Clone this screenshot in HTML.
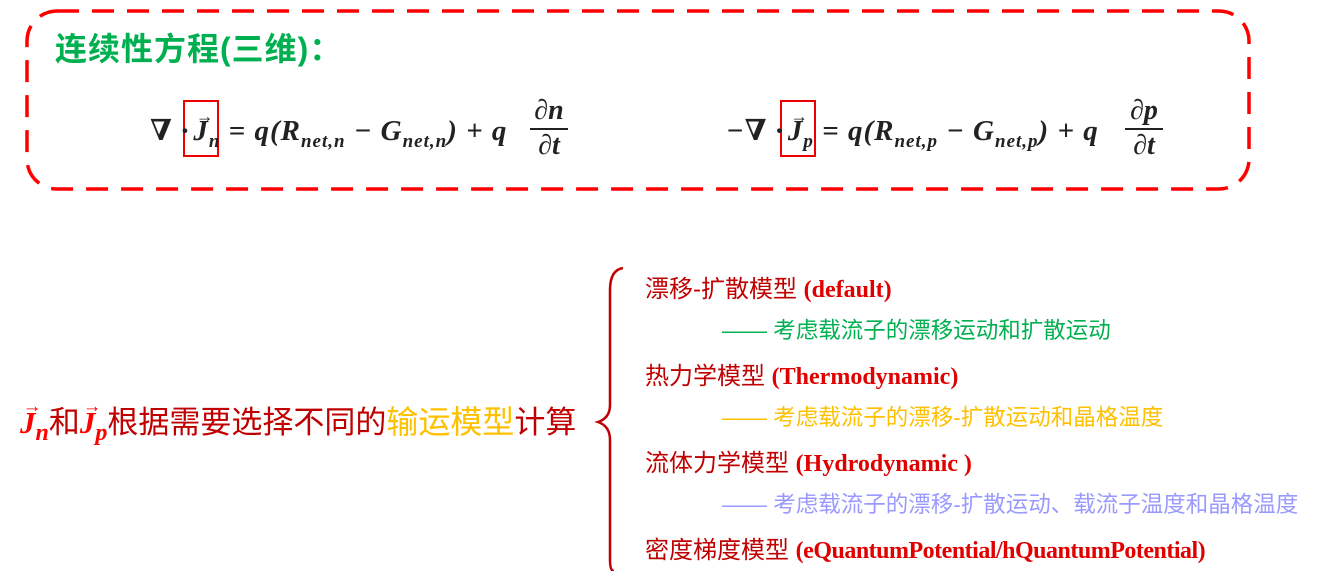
<!DOCTYPE html>
<html><head><meta charset="utf-8"><style>
body{margin:0;width:1340px;height:571px;background:#fff;position:relative;overflow:hidden;font-family:"Liberation Sans","Noto Sans CJK SC",sans-serif}
.a{position:absolute;white-space:nowrap;line-height:1}
.m{font-family:"Liberation Serif","DejaVu Serif",serif;font-weight:bold;font-style:italic;color:#222}
.r{color:#c00000;font-size:24px}
.r b{font-family:"Liberation Serif",serif;color:#e00000}
.s{font-size:22.5px}
.sub{font-size:19px;position:relative;top:7px}
.v{position:relative;display:inline-block}
.v::before{content:"→";position:absolute;top:-0.5em;left:0.15em;font-size:0.6em;font-style:normal;font-weight:normal}
</style></head><body>
<svg class="a" style="left:0;top:0" width="1340" height="571">
<rect x="27" y="11" width="1222" height="178" rx="30" fill="none" stroke="#f00" stroke-width="3.5" stroke-dasharray="22 13"/>
<rect x="184" y="101" width="34" height="55" fill="none" stroke="#e00" stroke-width="2"/>
<rect x="781" y="101" width="34" height="55" fill="none" stroke="#e00" stroke-width="2"/>
<path d="M623 268 Q610 270 610 290 L610 405 Q610 418 598 422 Q610 426 610 440 L610 560 Q610 571 614 571" fill="none" stroke="#c00000" stroke-width="2.5"/>
</svg>
<div class="a" style="left:55px;top:33px;font-size:32px;color:#00b050;font-weight:bold;letter-spacing:1px">连续性方程(三维)：</div>
<div class="a m" style="left:150px;top:117px;font-size:29px;letter-spacing:1px">∇ ·<span class="v" style="margin-left:4px">J</span><span class="sub">n</span> = q(R<span class="sub">net,n</span> − G<span class="sub">net,n</span>) + q</div>
<div class="a m" style="left:530px;top:97px;font-size:28px;text-align:center;width:38px">∂n<div style="border-top:2px solid #222;margin:3px 0 2px"></div>∂t</div>
<div class="a m" style="left:726px;top:117px;font-size:29px;letter-spacing:1px">−∇ ·<span class="v" style="margin-left:4px">J</span><span class="sub">p</span> = q(R<span class="sub">net,p</span> − G<span class="sub">net,p</span>) + q</div>
<div class="a m" style="left:1125px;top:97px;font-size:28px;text-align:center;width:38px">∂p<div style="border-top:2px solid #222;margin:3px 0 2px"></div>∂t</div>
<div class="a" style="left:20px;top:406px;font-size:31px;color:#c00000"><span class="m" style="color:#f00"><span class="v">J</span><span class="sub" style="font-size:24px">n</span></span>和<span class="m" style="color:#f00"><span class="v">J</span><span class="sub" style="font-size:24px">p</span></span>根据需要选择不同的<span style="color:#ffc000;font-size:32px">输运模型</span>计算</div>
<div class="a r" style="left:645px;top:278px">漂移-扩散模型 <b>(default)</b></div>
<div class="a s" style="left:722px;top:320px;color:#00b050">—— 考虑载流子的漂移运动和扩散运动</div>
<div class="a r" style="left:645px;top:365px">热力学模型 <b>(Thermodynamic)</b></div>
<div class="a s" style="left:722px;top:407px;color:#ffc000">—— 考虑载流子的漂移-扩散运动和晶格温度</div>
<div class="a r" style="left:645px;top:452px">流体力学模型 <b>(Hydrodynamic )</b></div>
<div class="a s" style="left:722px;top:494px;color:#9999ff">—— 考虑载流子的漂移-扩散运动、载流子温度和晶格温度</div>
<div class="a r" style="left:645px;top:539px">密度梯度模型 <b style="letter-spacing:-0.5px">(eQuantumPotential/hQuantumPotential)</b></div>
</body></html>
